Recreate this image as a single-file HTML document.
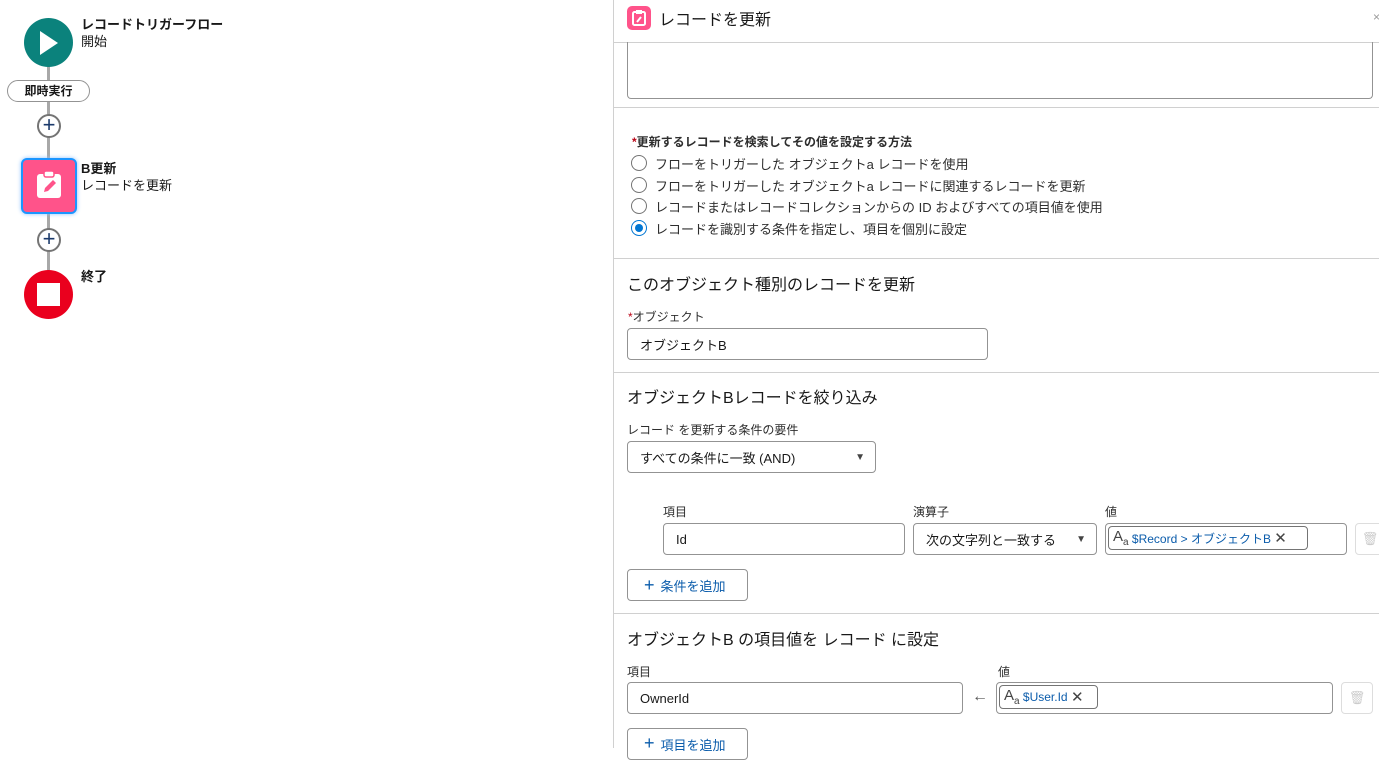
<!DOCTYPE html>
<html><head><meta charset="utf-8"><style>
*{box-sizing:border-box;margin:0;padding:0}
body{width:1379px;height:748px;overflow:hidden;background:#fff;font-family:"Liberation Sans","Noto Sans CJK JP",sans-serif;color:#181818;position:relative;font-size:13px}
.a{position:absolute}
.inp{position:absolute;border:1px solid #939393;border-radius:4px;background:#fff;font-size:13px;padding-left:12px;display:flex;align-items:center}
.hr{position:absolute;left:614px;right:0;height:1px;background:#d0d0d0}
.lbl{position:absolute;font-size:12px;color:#2e2e2e}
.rad{position:absolute;left:631px;width:16px;height:16px;border:1px solid #747474;border-radius:50%;background:#fff}
.rt{position:absolute;left:655px;font-size:13px;color:#2e2e2e}
.h{position:absolute;left:627px;font-size:16px;color:#181818}
.pill{position:absolute;border:1px solid #747474;border-radius:4px;display:flex;align-items:center;font-size:12px;color:#0b5cab;padding:0 4px;height:24px}
.btn{position:absolute;border:1px solid #939393;border-radius:4px;color:#0b5cab;font-size:13px;display:flex;align-items:center;padding-left:16px}
.plus{position:absolute;left:37px;width:24px;height:24px;border:2px solid #747474;border-radius:50%;background:#fff;color:#1b3a6b;font-size:22px;line-height:18px;text-align:center}
</style></head><body>
<div class="a" style="left:47px;top:60px;width:3px;height:220px;background:#a8a8a8"></div>
<div class="a" style="left:24px;top:18px;width:49px;height:49px;border-radius:50%;background:#0b827c"></div>
<svg class="a" style="left:38px;top:30px" width="22" height="26"><polygon points="2,1 20,13 2,25" fill="#fff"/></svg>
<div class="a" style="left:81px;top:14px;font-size:13px;font-weight:bold">レコードトリガーフロー</div>
<div class="a" style="left:81px;top:31px;font-size:13px">開始</div>
<div class="a" style="left:7px;top:80px;width:83px;height:22px;border:1px solid #939393;border-radius:11px;background:#fff;font-size:12px;font-weight:bold;text-align:center;line-height:20px">即時実行</div>
<div class="plus" style="top:114px">+</div>
<div class="a" style="left:21px;top:158px;width:56px;height:56px;border-radius:6px;border:2px solid #1b96ff;box-shadow:0 0 4px #8fc3ff;background:#ff538a"></div>
<svg class="a" style="left:35px;top:170px" width="28" height="30" viewBox="0 0 28 30"><rect x="2" y="4" width="24" height="24" rx="3" fill="#fff"/><rect x="9" y="1" width="10" height="6" rx="2" fill="#fff" stroke="#ff538a" stroke-width="1.5"/><path d="M9 22 L10 18 L18 10 L21 13 L13 21 Z" fill="#ff538a"/></svg>
<div class="a" style="left:81px;top:158px;font-size:13px;font-weight:bold">B更新</div>
<div class="a" style="left:81px;top:175px;font-size:13px">レコードを更新</div>
<div class="plus" style="top:228px">+</div>
<div class="a" style="left:24px;top:270px;width:49px;height:49px;border-radius:50%;background:#ea001e"></div>
<div class="a" style="left:37px;top:283px;width:23px;height:23px;background:#fff"></div>
<div class="a" style="left:81px;top:266px;font-size:13px;font-weight:bold">終了</div>
<div class="a" style="left:613px;top:0;width:1px;height:748px;background:#d0d0d0"></div>
<div class="a" style="left:627px;top:6px;width:24px;height:24px;border-radius:5px;background:#ff538a"></div>
<svg class="a" style="left:631px;top:9px" width="16" height="18" viewBox="0 0 16 18"><rect x="2" y="3" width="12" height="13" rx="1.5" fill="none" stroke="#fff" stroke-width="2"/><rect x="5" y="1" width="6" height="4" fill="#fff"/><path d="M6 13 L10 8" stroke="#fff" stroke-width="2"/></svg>
<div class="a" style="left:659px;top:6px;font-size:16px">レコードを更新</div>
<div class="a" style="left:1373px;top:10px;font-size:12px;color:#999">×</div>
<div class="hr" style="top:42px"></div>
<div class="a" style="left:627px;top:42px;width:746px;height:57px;border:1px solid #939393;border-top:none;border-radius:0 0 4px 4px"></div>
<div class="hr" style="top:107px"></div>
<div class="a" style="left:632px;top:133px;font-size:12px;font-weight:bold;color:#2e2e2e"><span style="color:#ba0517">*</span>更新するレコードを検索してその値を設定する方法</div>
<div class="rad" style="top:155px"></div><div class="rt" style="top:154px">フローをトリガーした オブジェクトa レコードを使用</div>
<div class="rad" style="top:177px"></div><div class="rt" style="top:176px">フローをトリガーした オブジェクトa レコードに関連するレコードを更新</div>
<div class="rad" style="top:198px"></div><div class="rt" style="top:197px">レコードまたはレコードコレクションからの ID およびすべての項目値を使用</div>
<div class="rad" style="top:220px;border-color:#0176d3"><div style="width:8px;height:8px;border-radius:50%;background:#0176d3;margin:3px"></div></div><div class="rt" style="top:219px">レコードを識別する条件を指定し、項目を個別に設定</div>
<div class="hr" style="top:258px"></div>
<div class="h" style="top:271px">このオブジェクト種別のレコードを更新</div>
<div class="lbl" style="left:628px;top:308px"><span style="color:#ba0517">*</span>オブジェクト</div>
<div class="inp" style="left:627px;top:328px;width:361px;height:32px">オブジェクトB</div>
<div class="hr" style="top:372px"></div>
<div class="h" style="top:384px">オブジェクトBレコードを絞り込み</div>
<div class="lbl" style="left:627px;top:421px">レコード を更新する条件の要件</div>
<div class="inp" style="left:627px;top:441px;width:249px;height:32px">すべての条件に一致 (AND)<span style="position:absolute;right:10px;font-size:10px;color:#444">▼</span></div>
<div class="lbl" style="left:663px;top:503px">項目</div>
<div class="lbl" style="left:913px;top:503px">演算子</div>
<div class="lbl" style="left:1105px;top:503px">値</div>
<div class="inp" style="left:663px;top:523px;width:242px;height:32px">Id</div>
<div class="inp" style="left:913px;top:523px;width:184px;height:32px">次の文字列と一致する<span style="position:absolute;right:10px;font-size:10px;color:#444">▼</span></div>
<div class="inp" style="left:1105px;top:523px;width:242px;height:32px;padding-left:2px"></div>
<div class="pill" style="left:1108px;top:526px;width:200px"><span style="color:#444;font-size:15px">A<sub style="font-size:10px">a</sub></span>&nbsp;$Record &gt; オブジェクトB&nbsp;<span style="color:#444;font-size:15px">✕</span></div>
<div class="a" style="left:1355px;top:523px;width:30px;height:32px;border:1px solid #ddd;border-radius:4px;color:#ccc;text-align:center;line-height:30px">🗑</div>
<div class="btn" style="left:627px;top:569px;width:121px;height:32px"><span style="font-size:18px;margin-right:6px">+</span>条件を追加</div>
<div class="hr" style="top:613px"></div>
<div class="h" style="top:626px">オブジェクトB の項目値を レコード に設定</div>
<div class="lbl" style="left:627px;top:663px">項目</div>
<div class="lbl" style="left:998px;top:663px">値</div>
<div class="inp" style="left:627px;top:682px;width:336px;height:32px">OwnerId</div>
<div class="a" style="left:972px;top:688px;font-size:16px;color:#555">←</div>
<div class="inp" style="left:996px;top:682px;width:337px;height:32px"></div>
<div class="pill" style="left:999px;top:685px;width:99px"><span style="color:#444;font-size:15px">A<sub style="font-size:10px">a</sub></span>&nbsp;$User.Id&nbsp;<span style="color:#444;font-size:15px">✕</span></div>
<div class="a" style="left:1341px;top:682px;width:32px;height:32px;border:1px solid #ddd;border-radius:4px;color:#ccc;text-align:center;line-height:30px">🗑</div>
<div class="btn" style="left:627px;top:728px;width:121px;height:32px;align-items:flex-start;padding-top:6px"><span style="font-size:18px;margin-right:6px;line-height:16px">+</span>項目を追加</div>
</body></html>
